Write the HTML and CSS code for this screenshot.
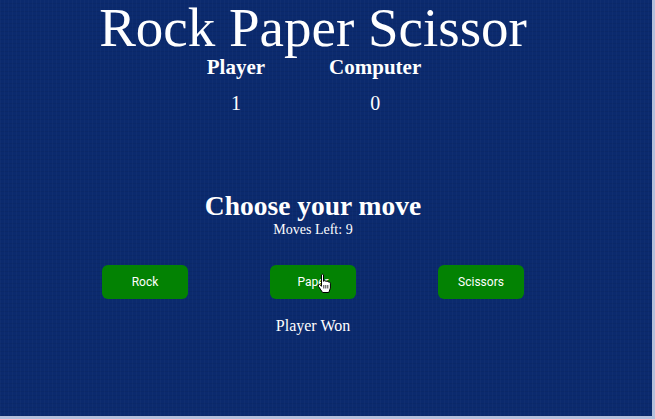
FILE: index.html
```html
<!DOCTYPE html>
<html lang="en">
<head>
<meta charset="utf-8">
<title>Rock Paper Scissor</title>
<link rel="stylesheet" href="styles.css">
</head>
<body>
<div class="page">
  <main class="game">
    <h1 class="title">Rock Paper Scissor</h1>
    <div class="score">
      <div class="score-head">Player</div>
      <div class="score-head">Computer</div>
      <div class="score-val">1</div>
      <div class="score-val">0</div>
    </div>
    <h2 class="choose">Choose your move</h2>
    <p class="moves">Moves Left: 9</p>
    <div class="options">
      <button class="btn">Rock</button>
      <button class="btn btn-hover">Paper
        <svg class="cursor" width="15" height="21" viewBox="0 0 15 21" aria-hidden="true">
          <path d="M4.5 1.8 Q5.5 0.6 6.5 1.8 L6.5 8.3 Q7.8 6.8 9 8.4 Q10.3 7.2 11.2 9 Q12.8 8.3 13.4 10.2 L13.4 15 L11.8 19.5 L5.6 19.5 L1.6 13.6 Q0.6 11.4 2.6 11.4 L4.5 13.3 Z" fill="#fff" stroke="#000" stroke-width="1" stroke-linejoin="round"/>
          <path d="M8.8 12 V15.5 M10.8 12 V15.5 M6.8 12 V15.5" stroke="#000" stroke-width="0.8"/>
        </svg>
      </button>
      <button class="btn">Scissors</button>
    </div>
    <p class="result">Player Won</p>
  </main>
</div>
</body>
</html>
```
FILE: styles.css
```css
html {
  background: #b4c0dc;
}
body {
  margin: 0;
}
.page {
  width: 652px;
  height: 416px;
  background-color: #0b2a6e;
  background-image:
    repeating-linear-gradient(90deg, rgba(255,255,255,0.018) 0 1px, transparent 1px 4px),
    repeating-linear-gradient(0deg, rgba(0,0,0,0.05) 0 1px, transparent 1px 4px);
  overflow: hidden;
}
.game {
  width: 626px;
  display: flex;
  flex-direction: column;
  align-items: center;
  color: #fff;
  font-family: "Liberation Serif", "Times New Roman", serif;
}
.title {
  margin: 0;
  font-size: 55px;
  line-height: 55px;
  font-weight: normal;
}
.score {
  display: grid;
  grid-template-columns: auto auto;
  row-gap: 12px;
  font-size: 20px;
  line-height: 24px;
  text-align: center;
  margin-left: 2px;
}
.score-head {
  font-weight: bold;
  font-size: 21px;
  padding: 0 32px;
}
.score-val {
  padding: 0 32px;
}
.choose {
  margin: 76px 0 0;
  font-size: 27.5px;
  line-height: 30px;
  font-weight: bold;
}
.moves {
  margin: 1px 0 0;
  font-size: 14px;
  line-height: 16px;
}
.options {
  margin-top: 27px;
  display: flex;
  gap: 82px;
}
.btn {
  position: relative;
  width: 86px;
  height: 34px;
  border: none;
  border-radius: 6px;
  background: #038203;
  color: #fff;
  font-family: Roboto, "Liberation Sans", Arial, sans-serif;
  font-size: 12px;
  font-weight: 400;
  padding: 0;
}
.cursor {
  position: absolute;
  left: 47px;
  top: 8px;
}
.result {
  margin: 18px 0 0;
  font-size: 16px;
  line-height: 18px;
}
```
